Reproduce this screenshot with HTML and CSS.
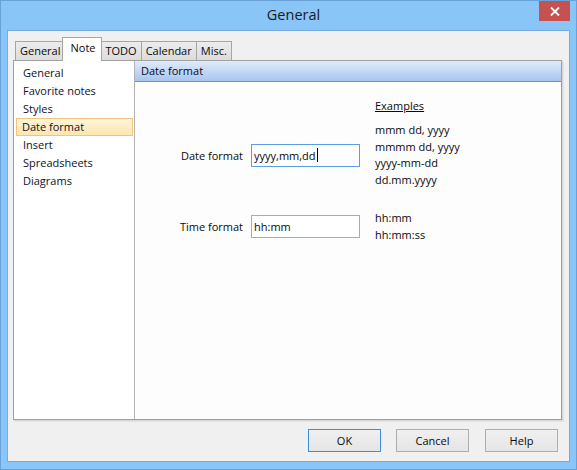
FILE: index.html
```html
<!DOCTYPE html>
<html>
<head>
<meta charset="utf-8">
<link rel="stylesheet" href="styles.css">
</head>
<body>
<div class="window">
  <div class="titlebar">
    <div class="tb-side"></div>
    <div class="title">General</div>
    <div class="tb-side tb-right">
      <div class="close">
        <svg width="10" height="9" viewBox="0 0 10 9"><path d="M1 0.5 L9 8.5 M9 0.5 L1 8.5" stroke="#fff" stroke-width="1.8" fill="none"/></svg>
      </div>
    </div>
  </div>
  <div class="client">
    <div class="tabs">
      <div class="tab">General</div>
      <div class="tab active">Note</div>
      <div class="tab">TODO</div>
      <div class="tab">Calendar</div>
      <div class="tab">Misc.</div>
    </div>
    <div class="panel">
      <ul class="list">
        <li>General</li>
        <li>Favorite notes</li>
        <li>Styles</li>
        <li class="selected">Date format</li>
        <li>Insert</li>
        <li>Spreadsheets</li>
        <li>Diagrams</li>
      </ul>
      <div class="pane">
        <div class="pane-header">Date format</div>
        <div class="pane-body">
          <div class="row head-row">
            <div class="col-label"></div>
            <div class="col-input"></div>
            <div class="examples-head">Examples</div>
          </div>
          <div class="row">
            <div class="col-label">Date format</div>
            <div class="col-input"><div class="input focus">yyyy,mm,dd<span class="caret"></span></div></div>
            <div class="examples">
              <div>mmm dd, yyyy</div>
              <div>mmmm dd, yyyy</div>
              <div>yyyy-mm-dd</div>
              <div>dd.mm.yyyy</div>
            </div>
          </div>
          <div class="row row-time">
            <div class="col-label">Time format</div>
            <div class="col-input"><div class="input">hh:mm</div></div>
            <div class="examples">
              <div>hh:mm</div>
              <div>hh:mm:ss</div>
            </div>
          </div>
        </div>
      </div>
    </div>
    <div class="buttons">
      <div class="btn default">OK</div>
      <div class="btn">Cancel</div>
      <div class="btn">Help</div>
    </div>
  </div>
</div>
</body>
</html>
```

FILE: styles.css
```css
* { box-sizing: border-box; }
html, body { margin: 0; padding: 0; }
body {
  width: 577px;
  height: 470px;
  overflow: hidden;
  font-family: "Open Sans", "Noto Sans", sans-serif;
  font-size: 11px;
  color: #0a0a0a;
}
.window {
  width: 577px;
  height: 470px;
  background: #8ac5f8;
  border: 1px solid #6aa2d8;
  display: flex;
  flex-direction: column;
}
.titlebar {
  height: 29px;
  display: grid;
  grid-template-columns: 1fr auto 1fr;
  align-items: start;
}
.title {
  font-size: 14.5px;
  color: #1a1a1a;
  line-height: 28px;
  padding-left: 10px;
}
.tb-right {
  display: flex;
  justify-content: flex-end;
  padding-right: 6px;
}
.close {
  width: 31px;
  height: 20px;
  background: #c75050;
  display: flex;
  align-items: center;
  justify-content: center;
}
.client {
  flex: 1;
  margin: 0 6px 7px 6px;
  background: #f0f0f0;
  border: 1px solid #74aadd;
  display: flex;
  flex-direction: column;
}
.tabs {
  display: flex;
  align-items: flex-end;
  height: 29px;
  padding-left: 7px;
  position: relative;
  z-index: 2;
}
.tab {
  height: 19px;
  line-height: 18px;
  padding: 0 4px;
  background: linear-gradient(#ececec, #dcdcdc);
  border: 1px solid #a5a5a5;
  border-bottom: none;
  margin-right: -1px;
  color: #0a0a0a;
}
.tab.active {
  height: 24px;
  line-height: 20px;
  background: #fff;
  padding: 0 6px 0 7px;
  margin: 0 -2px -1px -2px;
  position: relative;
  z-index: 3;
  border-color: #a5a5a5;
}
.panel {
  margin-left: 5px;
  width: 549px;
  height: 360px;
  border: 1px solid #a0a0a0;
  box-shadow: 1px 1px 0 #d6d6d6, 2px 2px 0 #e4e4e4;
  display: flex;
  background: #fff;
}
.list {
  list-style: none;
  margin: 0;
  padding: 3px 0 0 1px;
  width: 121px;
  border-right: 1px solid #b4b4b4;
  background: #fff;
}
.list li {
  height: 18px;
  line-height: 18px;
  width: 117px;
  padding-left: 6px;
  margin-left: 1px;
  border: 1px solid transparent;
  display: flex;
  align-items: center;
  color: #10102a;
}
.list li.selected {
  background: linear-gradient(#fef5da, #fde6b0);
  border-color: #f2c37c;
  padding-left: 5px;
}
.pane {
  flex: 1;
  display: flex;
  flex-direction: column;
  background: #fdfdfd;
}
.pane-header {
  height: 21px;
  line-height: 20px;
  padding-left: 6px;
  background: linear-gradient(#e0ebfc, #a8c5ef);
  border-bottom: 1px solid #6592d8;
  color: #0a0a0a;
}
.pane-body {
  padding-top: 16px;
}
.row {
  display: flex;
  align-items: center;
}
.head-row {
  margin-bottom: 8px;
  line-height: 16px;
}
.row-time {
  margin-top: 22px;
}
.col-label {
  width: 116px;
  padding-right: 8px;
  text-align: right;
  flex: none;
}
.col-input {
  width: 124px;
  flex: none;
}
.examples-head {
  text-decoration: underline;
}
.examples {
  line-height: 16.6px;
}
.input {
  width: 109px;
  height: 23px;
  border: 1px solid #acacac;
  background: #fff;
  padding-left: 2px;
  line-height: 21px;
  display: flex;
  align-items: center;
}
.input.focus {
  border-color: #5b9ee4;
}
.caret {
  display: inline-block;
  width: 1px;
  height: 14px;
  background: #000;
  margin-left: 1px;
}
.buttons {
  display: flex;
  justify-content: flex-end;
  gap: 15px;
  padding: 9px 11px 0 0;
}
.btn {
  width: 73px;
  height: 23px;
  border: 1px solid #adadad;
  background: linear-gradient(#f0f0f0, #e5e5e5);
  display: flex;
  align-items: center;
  justify-content: center;
  color: #0a0a0a;
}
.btn + .btn:last-child { margin-left: 1px; }
.btn.default {
  border-color: #3c8de0;
}
```
